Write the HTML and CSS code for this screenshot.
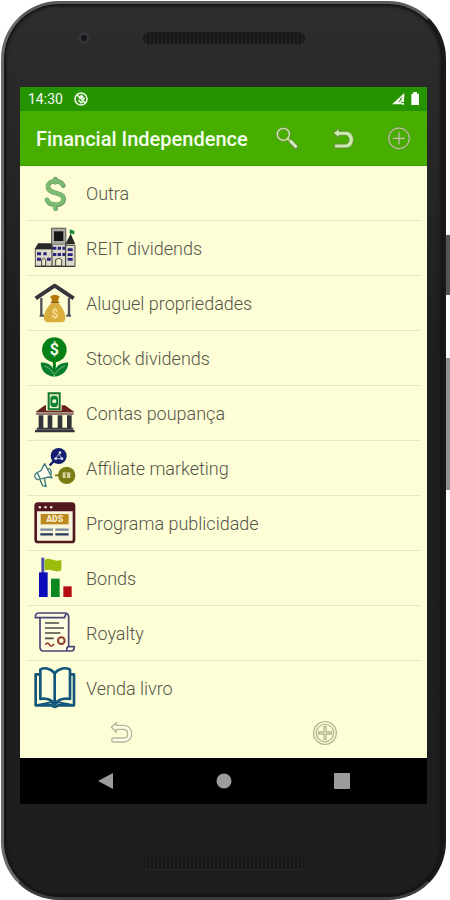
FILE: index.html
```html
<!DOCTYPE html>
<html lang="pt">
<head>
    <meta charset="UTF-8">
    <meta name="viewport" content="width=device-width, initial-scale=1.0">
    <title>Financial Independence</title>
    <link rel="stylesheet" href="styles.css">
</head>
<body>
    <div class="phone">
        <span class="side-button power"></span>
        <span class="side-button volume"></span>

        <div class="bezel top">
            <span class="camera"></span>
            <span class="speaker"></span>
        </div>

        <div class="screen">
            <div class="status-bar">
                <span>14:30</span>
                <svg class="status-icon" width="14" height="14" viewBox="0 0 42 42" fill="none" stroke="#e9f5e2">
                    <circle cx="21" cy="21" r="18" stroke-width="5"/>
                    <path d="M10 9l24 24M15 20l7-9 8 9-5 3M13 24l8 8 7-4" stroke-width="5"/>
                </svg>
                <svg class="signal" width="28" height="14" viewBox="0 0 84 42">
                    <path d="M0 37L37 3v15h-8v19z" fill="#f4faf0"/>
                    <path d="M33 18v12M33 33v5" stroke="#f4faf0" stroke-width="6"/>
                    <path d="M29 17l-8 13" stroke="#259200" stroke-width="3"/>
                    <path d="M58 5h6V0h11v5h6v34H58z" fill="#fff"/>
                </svg>
            </div>

            <header class="app-bar">
                <h1>Financial Independence</h1>
                <button type="button" aria-label="Search">
                    <svg width="24" height="24" viewBox="0 0 72 72" fill="none">
                        <circle cx="25" cy="25" r="18" stroke="#7d8a50" stroke-width="8"/>
                        <circle cx="25" cy="25" r="18" stroke="#c5e8a8" stroke-width="4"/>
                        <path d="M38 38l7 7" stroke="#c5e8a8" stroke-width="6"/>
                        <path d="M47 47l15 15" stroke="#6f7f45" stroke-width="14" stroke-linecap="round"/>
                        <path d="M47 46l15 15" stroke="#d3edbd" stroke-width="9" stroke-linecap="round"/>
                    </svg>
                </button>
                <button type="button" aria-label="Back">
                    <svg width="24" height="24" viewBox="0 0 72 72" fill="none">
                        <path d="M7 21L24 8v8h20c31 0 31 50 0 50H11V54h32c15 0 15-26 0-26H24v7z" fill="#c9ebad" stroke="#6f8a45" stroke-width="3" stroke-linejoin="round"/>
                    </svg>
                </button>
                <button type="button" aria-label="Add">
                    <svg width="24" height="24" viewBox="0 0 72 72" fill="none">
                        <circle cx="36" cy="37" r="31" stroke="#7c8a52" stroke-width="6"/>
                        <circle cx="36" cy="37" r="31" stroke="#b9e098" stroke-width="3"/>
                        <path d="M36 18v38M17 37h38" stroke="#7c8a52" stroke-width="7"/>
                        <path d="M36 19v36M18 37h36" stroke="#b9e098" stroke-width="3"/>
                    </svg>
                </button>
            </header>

            <main>
                <ul class="income-list">
                    <li>
                        <svg class="icon" viewBox="0 0 126 126" fill="none" stroke-linecap="round">
                            <path d="M88 41C78 21 42 24 42 44c0 24 47 14 47 37 0 23-41 23-50 3M64 21v10M65 98v12" stroke="#77936b" stroke-width="14"/>
                            <path d="M86 39C76 21 41 24 41 43c0 24 47 14 47 37 0 22-40 22-50 3M62 21v10M63 98v12" stroke="#79bd70" stroke-width="11"/>
                        </svg>
                        <span>Outra</span>
                    </li>
                    <li>
                        <svg class="icon" viewBox="0 0 126 126">
                            <path d="M110 32V9" stroke="#333" stroke-width="2"/>
                            <path d="M107 7l14 5v10l-14-3z" fill="#138b35"/>
                            <path d="M4 65h49V4h42v51h28v63H4z" fill="#dcd9c7" stroke="#54534e" stroke-width="3"/>
                            <path d="M53 4h42v48H53z" fill="#aaa8a0" stroke="#555" stroke-width="2"/>
                            <path d="M60 13h28v29H60z" fill="#151515"/>
                            <path d="M2 67l10-18h39l7 18zM94 52l16-32 14 32z" fill="#292929"/>
                            <path d="M9 76h12v9H9zm19 0h10v9H28zM9 92h12v9H9zm30 0h11v9H39zM57 59h10v9H57zm14 0h10v9H71zm14 0h8v9h-8zM57 78h10v9H57zm14 0h10v9H71zm14 0h8v9h-8zM101 64h15v8h-15zm0 15h15v8h-15zm0 14h15v8h-15z" fill="#29257e"/>
                            <path d="M23 117V98q6-9 12 0v19zM65 117V98q10-9 18 0v19z" fill="#eeeacb" stroke="#3f4038" stroke-width="3"/>
                            <path d="M54 53v64M95 53v64M2 118h122" stroke="#333" stroke-width="3"/>
                        </svg>
                        <span>REIT dividends</span>
                    </li>
                    <li>
                        <svg class="icon" viewBox="0 0 126 126">
                            <path d="M22 48v53M105 48v53M17 101h13M97 101h14" fill="none" stroke="#53535c" stroke-width="7"/>
                            <path d="M5 49l57-38 57 38" fill="none" stroke="#34343a" stroke-width="12" stroke-linejoin="round"/>
                            <path d="M49 43q13-10 28 0l-6 17H55z" fill="#b7790b"/>
                            <path d="M53 63h20c9 9 20 26 21 42 1 12-5 16-13 16H43c-10 0-14-5-13-16 1-17 13-33 23-42z" fill="#d9ae3c"/>
                            <path d="M50 61h26" stroke="#87621c" stroke-width="4"/>
                            <text class="money small" x="63" y="107">$</text>
                        </svg>
                        <span>Aluguel propriedades</span>
                    </li>
                    <li>
                        <svg class="icon" viewBox="0 0 126 126">
                            <circle cx="61" cy="38" r="37" fill="#078016"/>
                            <path d="M61 70v43" stroke="#078016" stroke-width="9"/>
                            <path d="M20 77c19-3 38 8 40 28v14C36 116 21 101 20 77zM103 77c-20-2-38 9-41 28v14c23-3 40-18 41-42z" fill="#087d2c"/>
                            <path d="M31 86q19 7 29 25M93 86q-20 8-31 25" fill="none" stroke="#78b77b" stroke-width="3"/>
                            <text class="money" x="61" y="54">$</text>
                        </svg>
                        <span>Stock dividends</span>
                    </li>
                    <li>
                        <svg class="icon" viewBox="0 0 126 126">
                            <path d="M5 60l28-20h60l28 20z" fill="#681f20"/>
                            <path d="M36 1h47v55H36z" fill="#fbf8d1"/>
                            <path d="M44 4h33v48H44z" fill="#f1f6c8" stroke="#13762b" stroke-width="6"/>
                            <path d="M54 11h13l5 6v21l-5 7H54l-5-7V17z" fill="#14833a"/>
                            <circle cx="61" cy="28" r="6" fill="#f1f6c8"/>
                            <path d="M6 61h113v8H6z" fill="#92776e"/>
                            <path d="M14 70h14v38H14zm27 0h14v38H41zm30 0h14v38H71zm28 0h14v38H99zM8 107h110v6H8zM3 114h119v7H3z" fill="#33343b"/>
                        </svg>
                        <span>Contas poupança</span>
                    </li>
                    <li>
                        <svg class="icon" viewBox="0 0 126 126" fill="none">
                            <path d="M61 41L47 55" stroke="#171d6b" stroke-width="7"/>
                            <path d="M63 85h25" stroke="#858026" stroke-width="6"/>
                            <circle cx="74" cy="27" r="24" fill="#141d70"/>
                            <path d="M78 16l-8 12-5 7h18l-7-13" stroke="#b9bed1" stroke-width="3"/>
                            <circle cx="78" cy="17" r="4" fill="#d9dced"/><circle cx="65" cy="35" r="4" fill="#d9dced"/><circle cx="84" cy="35" r="4" fill="#d9dced"/>
                            <circle cx="98" cy="85" r="26" fill="#7b7b13"/>
                            <path d="M86 76h23v17H86z" fill="#d1d29a"/><path d="M97 77v15" stroke="#7b7b13" stroke-width="4"/>
                            <path d="M32 50l22 43-10-3-20 5-14 3c-9-4-10-14-3-20l14-7z" fill="#fffff0" stroke="#487f84" stroke-width="4" stroke-linejoin="round"/>
                            <path d="M18 98l8 18 10 2-5-24M41 65q13-1 10 18M10 78l9 18" stroke="#36747b" stroke-width="4"/>
                        </svg>
                        <span>Affiliate marketing</span>
                    </li>
                    <li>
                        <svg class="icon" viewBox="0 0 126 126">
                            <rect x="5" y="5" width="115" height="115" rx="7" fill="#f8f5dd" stroke="#521820" stroke-width="8"/>
                            <path d="M4 4h117v24H4z" fill="#521820"/>
                            <path d="M14 16h7m10 0h7m10 0h7" stroke="#fbf5e1" stroke-width="6"/>
                            <path d="M20 36h84v31H20z" fill="#bd891e"/>
                            <text class="ads" x="62" y="61">ADS</text>
                            <path d="M19 83h38m7 0h40" stroke="#7d899b" stroke-width="7"/>
                            <path d="M19 97h38m7 0h40" stroke="#25395d" stroke-width="7"/>
                        </svg>
                        <span>Programa publicidade</span>
                    </li>
                    <li>
                        <svg class="icon" viewBox="0 0 126 126">
                            <path d="M22 2h9v47H22z" fill="#4e50ac"/>
                            <path d="M32 8c17-9 29 10 50 0v32c-18 10-32-8-50 1z" fill="#99bd09"/>
                            <path d="M15 46h26v74H15z" fill="#0c0cbb"/>
                            <path d="M51 65h26v55H51z" fill="#0c861e"/>
                            <path d="M88 88h25v32H88z" fill="#b50b13"/>
                        </svg>
                        <span>Bonds</span>
                    </li>
                    <li>
                        <svg class="icon" viewBox="0 0 126 126" fill="none">
                            <path d="M18 18v87c0 8 4 12 10 12h84c7 0 9-4 9-13h-17V16c0-8-4-13-12-13H14C7 3 4 7 4 17h88c1-7 3-11 8-13M104 104c-5 1-7 5-5 12" fill="#fffddf" stroke="#464575" stroke-width="5" stroke-linejoin="round"/>
                            <path d="M33 33h42M33 48h57M33 63h46M33 79h26" stroke="#494b45" stroke-width="5"/>
                            <circle cx="82" cy="86" r="10" stroke="#8c3d28" stroke-width="6"/>
                            <path d="M34 98q7-9 12 0t14-2" stroke="#9b3925" stroke-width="5"/>
                        </svg>
                        <span>Royalty</span>
                    </li>
                    <li>
                        <svg class="icon" viewBox="0 0 126 126" fill="none" stroke="#12577b" stroke-width="8" stroke-linejoin="round">
                            <path d="M18 22H5v93h48c4 6 15 6 19 0h48V22h-11"/>
                            <path d="M62 19C48 2 29 1 19 8v88c17-3 33 1 43 16 11-15 28-19 46-16V8C96 1 76 2 62 19zv92" fill="#fbffde"/>
                            <path d="M7 115l45-9 10 7 10-7 48 9" stroke-width="6"/>
                        </svg>
                        <span>Venda livro</span>
                    </li>
                </ul>

                <div class="actions">
                    <button type="button" aria-label="Back">
                        <svg width="24" height="24" viewBox="0 0 72 72">
                            <path d="M4 19L19 5v8h22c32 0 32 50 0 50H9c-5 0-5-12 0-12h32c16 0 16-26 0-26H19v9z" fill="#fdfee8" stroke="#b5b698" stroke-width="4" stroke-linejoin="round"/>
                        </svg>
                    </button>
                    <button type="button" aria-label="Add">
                        <svg width="24" height="24" viewBox="0 0 72 72" fill="none" stroke="#b5b592">
                            <circle cx="36" cy="36" r="34" stroke-width="4"/>
                            <circle cx="36" cy="36" r="26" stroke-width="4"/>
                            <path d="M33 17h6v16h16v6H39v16h-6V39H17v-6h16z" stroke-width="4"/>
                        </svg>
                    </button>
                </div>
            </main>

            <nav class="nav-bar">
                <button type="button" aria-label="Back">
                    <svg width="16" height="18" viewBox="0 0 16 18"><path d="M0 9L15 1v16z" fill="#9c9c9c"/></svg>
                </button>
                <button type="button" aria-label="Home">
                    <svg width="16" height="16" viewBox="0 0 16 16"><circle cx="8" cy="8" r="7.5" fill="#9c9c9c"/></svg>
                </button>
                <button type="button" aria-label="Recent apps">
                    <svg width="16" height="16" viewBox="0 0 16 16"><rect width="16" height="16" rx="1" fill="#9c9c9c"/></svg>
                </button>
            </nav>
        </div>

        <div class="bezel bottom">
            <span class="speaker"></span>
        </div>
    </div>
</body>
</html>
```
FILE: styles.css
```css
* {
    box-sizing: border-box;
}
body {
    margin: 0;
    padding: 1px 4px 0 1px;
    background: #fff;
    font-family: Roboto, "Noto Sans", sans-serif;
}
button {
    display: flex;
    justify-content: center;
    align-items: center;
    padding: 0;
    border: none;
    background: none;
    cursor: pointer;
}

/* phone body */
.phone {
    position: relative;
    padding: 0 16px;
    background: linear-gradient(#2d2d2e, #1d1d1e 40%, #1e1e1f);
    border: 3px solid #1a1a1b;
    border-top-color: #5a5a5b;
    border-left-color: #6a6a6b;
    border-bottom-color: #3c3c3d;
    border-radius: 58px;
    box-shadow: inset 0 0 3px 2px #121213;
}
.side-button {
    position: absolute;
    right: -7px;
    width: 4px;
    background: #555;
}
.power {
    top: 231px;
    height: 60px;
}
.volume {
    top: 354px;
    height: 132px;
    background: #929292;
}
.bezel {
    position: relative;
    display: flex;
    justify-content: center;
}
.top {
    height: 83px;
    padding-top: 28px;
}
.bottom {
    height: 93px;
    padding-top: 53px;
}
.speaker {
    width: 162px;
    height: 12px;
    border-radius: 6px;
    background: repeating-linear-gradient(90deg, #171718 0 2px, #202021 2px 4px);
    box-shadow: 0 1px 0 #2b2b2c;
}
.camera {
    position: absolute;
    top: 28px;
    left: 58px;
    width: 12px;
    height: 12px;
    border: 3px solid #363638;
    border-radius: 50%;
    background: #15151c;
}

/* screen */
.screen {
    background: #fdfed5;
}
.status-bar {
    display: flex;
    align-items: center;
    height: 24px;
    padding: 0 7px 0 8px;
    background: #259200;
    color: #f4faf0;
    font-size: 14px;
}
.status-icon {
    margin-left: 11px;
}
.signal {
    margin-left: auto;
}
.app-bar {
    display: flex;
    height: 55px;
    padding-left: 16px;
    background: #47ae00;
    border-bottom: 1px solid #3a9a08;
}
.app-bar h1 {
    flex: 1;
    margin: 0;
    color: #f6fbf0;
    font-size: 20px;
    font-weight: 500;
    line-height: 56px;
    white-space: nowrap;
}
.app-bar button {
    width: 56px;
}

/* income sources */
.income-list {
    margin: 0;
    padding: 0 7px;
    list-style: none;
}
.income-list li {
    display: flex;
    align-items: center;
    gap: 10px;
    height: 55px;
    padding-left: 7px;
    border-bottom: 1px solid #e6e6c4;
    color: #55554c;
    font-size: 18px;
    font-weight: 300;
}
.income-list li:last-child {
    height: 54px;
    border-bottom: none;
}
.icon {
    width: 42px;
    height: 42px;
}
.money {
    fill: #f4fbe8;
    font-size: 48px;
    font-weight: 700;
    text-anchor: middle;
}
.small {
    fill: #f3dc95;
    font-size: 36px;
}
.ads {
    fill: #f6edcd;
    font-size: 26px;
    font-weight: 900;
    text-anchor: middle;
}
.actions {
    display: grid;
    grid-template-columns: 1fr 1fr;
    padding-bottom: 7px;
}
.actions button {
    height: 36px;
}

/* system navigation */
.nav-bar {
    display: flex;
    justify-content: center;
    height: 46px;
    background: #000;
}
.nav-bar button {
    width: 118px;
}
```
